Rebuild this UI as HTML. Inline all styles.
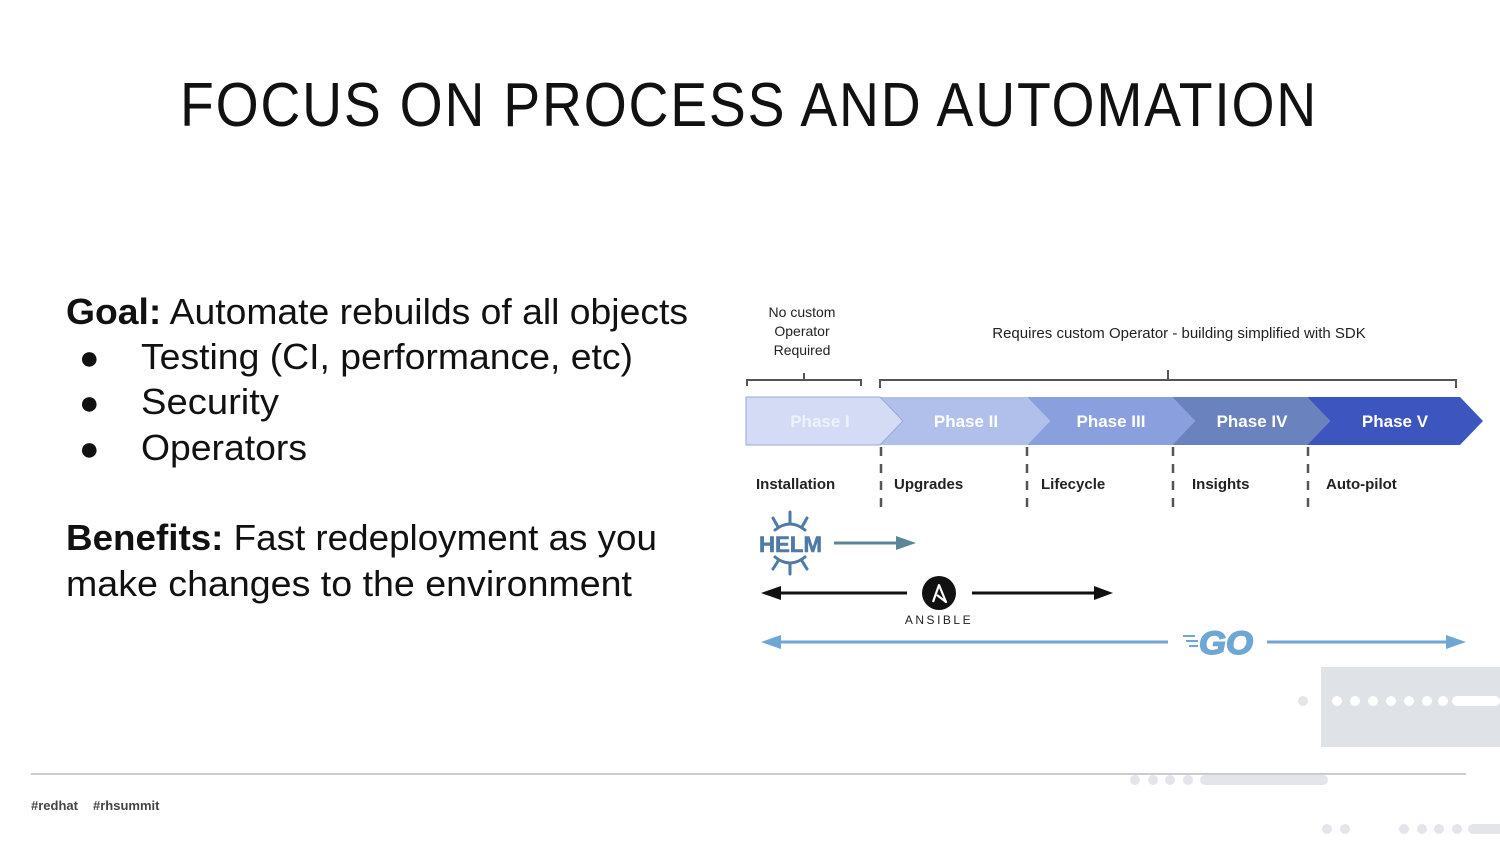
<!DOCTYPE html>
<html><head><meta charset="utf-8"><style>
html,body{margin:0;padding:0;background:#fff;}
svg{display:block;font-family:"Liberation Sans",sans-serif;}
</style></head><body>
<svg width="1500" height="843" viewBox="0 0 1500 843" xmlns="http://www.w3.org/2000/svg">
<text x="180" y="126" font-size="62" fill="#111" textLength="1138" lengthAdjust="spacingAndGlyphs" letter-spacing="2">FOCUS ON PROCESS AND AUTOMATION</text>

<g font-size="36" fill="#111">
<text x="66" y="324" textLength="622" lengthAdjust="spacingAndGlyphs"><tspan font-weight="bold">Goal:</tspan> Automate rebuilds of all objects</text>
<text x="79" y="369" font-size="34">●</text>
<text x="141" y="369" textLength="492" lengthAdjust="spacingAndGlyphs">Testing (CI, performance, etc)</text>
<text x="79" y="414" font-size="34">●</text>
<text x="141" y="414" textLength="138" lengthAdjust="spacingAndGlyphs">Security</text>
<text x="79" y="460" font-size="34">●</text>
<text x="141" y="460" textLength="166" lengthAdjust="spacingAndGlyphs">Operators</text>
<text x="66" y="550" textLength="591" lengthAdjust="spacingAndGlyphs"><tspan font-weight="bold">Benefits:</tspan> Fast redeployment as you</text>
<text x="66" y="596" textLength="566" lengthAdjust="spacingAndGlyphs">make changes to the environment</text>
</g>

<g font-size="14" fill="#222" text-anchor="middle">
<text x="802" y="317">No custom</text>
<text x="802" y="336">Operator</text>
<text x="802" y="355">Required</text>
<text x="1179" y="338" font-size="15">Requires custom Operator - building simplified with SDK</text>
</g>
<g fill="none" stroke="#555" stroke-width="2">
<path d="M747 386 V380 H861 V386 M804 380 V373"/>
<path d="M880 388 V380 H1456 V388 M1168 380 V370"/>
</g>

<polygon points="1307,397 1460,397 1483,421 1460,445 1307,445 1330,421" fill="#3d55bf"/>
<polygon points="1172,397 1307,397 1330,421 1307,445 1172,445 1195,421" fill="#6a82bd"/>
<polygon points="1027,397 1172,397 1195,421 1172,445 1027,445 1050,421" fill="#8aa0de"/>
<polygon points="880,397 1027,397 1050,421 1027,445 880,445 903,421" fill="#b1c0eb"/>
<polygon points="746,397 880,397 903,421 880,445 746,445" fill="#d3dcf4" stroke="#9aa8d8" stroke-width="1"/>
<g font-size="17" font-weight="bold" fill="#fff" text-anchor="middle">
<text x="820" y="427" fill="#eef2fb">Phase I</text>
<text x="966" y="427">Phase II</text>
<text x="1111" y="427">Phase III</text>
<text x="1252" y="427">Phase IV</text>
<text x="1395" y="427">Phase V</text>
</g>
<g stroke="#555" stroke-width="2.5" stroke-dasharray="9,8">
<line x1="881" y1="447" x2="881" y2="508"/>
<line x1="1027" y1="447" x2="1027" y2="508"/>
<line x1="1173" y1="447" x2="1173" y2="508"/>
<line x1="1308" y1="447" x2="1308" y2="508"/>
</g>
<g font-size="15" font-weight="bold" fill="#222">
<text x="756" y="489">Installation</text>
<text x="894" y="489">Upgrades</text>
<text x="1041" y="489">Lifecycle</text>
<text x="1192" y="489">Insights</text>
<text x="1326" y="489">Auto-pilot</text>
</g>

<g stroke="#4e7aa6" stroke-width="3" fill="none" stroke-linecap="round">
<path d="M775 530 Q790 518 805 530"/>
<line x1="790" y1="512" x2="790" y2="523"/>
<line x1="773" y1="518" x2="778" y2="527"/>
<line x1="807" y1="518" x2="802" y2="527"/>
<path d="M775 557 Q790 569 805 557"/>
<line x1="790" y1="564" x2="790" y2="574"/>
<line x1="773" y1="569" x2="778" y2="561"/>
<line x1="807" y1="569" x2="802" y2="561"/>
</g>
<text x="759" y="552" font-size="22" font-weight="bold" fill="#4e7aa6" textLength="63" lengthAdjust="spacingAndGlyphs" stroke="#4e7aa6" stroke-width="0.6">HELM</text>
<line x1="834" y1="543" x2="900" y2="543" stroke="#5e8496" stroke-width="3"/>
<polygon points="896,536 916,543 896,550" fill="#5e8496"/>

<line x1="778" y1="593" x2="907" y2="593" stroke="#111" stroke-width="3"/>
<polygon points="761,593 781,586 781,600" fill="#111"/>
<line x1="972" y1="593" x2="1097" y2="593" stroke="#111" stroke-width="3"/>
<polygon points="1094,586 1113,593 1094,600" fill="#111"/>
<circle cx="939" cy="593" r="17" fill="#111"/>
<path d="M933 602 L939 585 L946 602 L937 595" fill="none" stroke="#fff" stroke-width="2.2" stroke-linejoin="round"/>
<text x="939" y="624" font-size="12" text-anchor="middle" fill="#222" letter-spacing="2.5">ANSIBLE</text>

<line x1="778" y1="642" x2="1168" y2="642" stroke="#6fa6d3" stroke-width="3"/>
<polygon points="761,642 781,635 781,649" fill="#6fa6d3"/>
<line x1="1267" y1="642" x2="1450" y2="642" stroke="#6fa6d3" stroke-width="3"/>
<polygon points="1446,635 1466,642 1446,649" fill="#6fa6d3"/>
<g stroke="#6fa6d3" stroke-width="2"><line x1="1183" y1="636" x2="1195" y2="636"/><line x1="1186" y1="641" x2="1198" y2="641"/><line x1="1189" y1="646" x2="1198" y2="646"/></g>
<text x="1199" y="654" font-size="32" font-weight="bold" font-style="italic" fill="#6fa6d3" textLength="54" lengthAdjust="spacingAndGlyphs" stroke="#6fa6d3" stroke-width="1.5">GO</text>

<rect x="1321" y="667" width="179" height="80" fill="#dfe2e7"/>
<circle cx="1303" cy="701" r="5" fill="#e3e5e9"/>
<g fill="#fff">
<circle cx="1337" cy="701" r="5"/><circle cx="1355" cy="701" r="5"/><circle cx="1373" cy="701" r="5"/><circle cx="1391" cy="701" r="5"/><circle cx="1409" cy="701" r="5"/><circle cx="1427" cy="701" r="5"/><circle cx="1443" cy="701" r="5"/>
<rect x="1452" y="696" width="48" height="10" rx="5"/>
</g>
<line x1="31" y1="774" x2="1466" y2="774" stroke="#bbb" stroke-width="1.5"/>
<g fill="#e3e5ea">
<circle cx="1135" cy="780" r="5"/><circle cx="1153" cy="780" r="5"/><circle cx="1170" cy="780" r="5"/><circle cx="1188" cy="780" r="5"/>
<rect x="1200" y="775" width="128" height="10" rx="5"/>
<circle cx="1327" cy="829" r="5"/><circle cx="1345" cy="829" r="5"/>
<circle cx="1404" cy="829" r="5"/><circle cx="1422" cy="829" r="5"/><circle cx="1439" cy="829" r="5"/><circle cx="1457" cy="829" r="5"/>
<rect x="1468" y="824" width="40" height="10" rx="5"/>
</g>
<text x="31" y="810" font-size="13" font-weight="bold" fill="#444">#redhat</text>
<text x="93" y="810" font-size="13" font-weight="bold" fill="#444">#rhsummit</text>
</svg>
</body></html>
